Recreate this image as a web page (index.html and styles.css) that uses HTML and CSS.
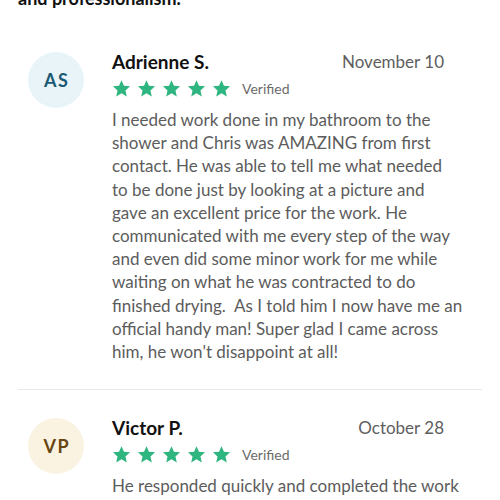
FILE: index.html
```html
<!DOCTYPE html>
<html>
<head>
<meta charset="utf-8">
<link rel="stylesheet" href="styles.css">
</head>
<body>
<p class="intro">and professionalism.</p>
<div class="review">
  <div class="avatar avatar-blue">AS</div>
  <div class="content">
    <div class="head">
      <div class="name">Adrienne S.</div>
      <div class="date">November 10</div>
    </div>
    <div class="rating">
      <span class="stars">
        <svg viewBox="0 0 24 24"><path d="M12 1.5l3.1 7.1 7.7.7-5.8 5.1 1.7 7.6L12 18l-6.7 4 1.7-7.6-5.8-5.1 7.7-.7z"/></svg>
        <svg viewBox="0 0 24 24"><path d="M12 1.5l3.1 7.1 7.7.7-5.8 5.1 1.7 7.6L12 18l-6.7 4 1.7-7.6-5.8-5.1 7.7-.7z"/></svg>
        <svg viewBox="0 0 24 24"><path d="M12 1.5l3.1 7.1 7.7.7-5.8 5.1 1.7 7.6L12 18l-6.7 4 1.7-7.6-5.8-5.1 7.7-.7z"/></svg>
        <svg viewBox="0 0 24 24"><path d="M12 1.5l3.1 7.1 7.7.7-5.8 5.1 1.7 7.6L12 18l-6.7 4 1.7-7.6-5.8-5.1 7.7-.7z"/></svg>
        <svg viewBox="0 0 24 24"><path d="M12 1.5l3.1 7.1 7.7.7-5.8 5.1 1.7 7.6L12 18l-6.7 4 1.7-7.6-5.8-5.1 7.7-.7z"/></svg>
      </span>
      <span class="verified">Verified</span>
    </div>
    <p class="text">I needed work done in my bathroom to the<br>shower and Chris was AMAZING from first<br>contact. He was able to tell me what needed<br>to be done just by looking at a picture and<br>gave an excellent price for the work. He<br>communicated with me every step of the way<br>and even did some minor work for me while<br>waiting on what he was contracted to do<br>finished drying.&nbsp; As I told him I now have me an<br>official handy man! Super glad I came across<br>him, he won't disappoint at all!</p>
  </div>
</div>
<hr class="divider">
<div class="review">
  <div class="avatar avatar-cream">VP</div>
  <div class="content">
    <div class="head">
      <div class="name">Victor P.</div>
      <div class="date">October 28</div>
    </div>
    <div class="rating">
      <span class="stars">
        <svg viewBox="0 0 24 24"><path d="M12 1.5l3.1 7.1 7.7.7-5.8 5.1 1.7 7.6L12 18l-6.7 4 1.7-7.6-5.8-5.1 7.7-.7z"/></svg>
        <svg viewBox="0 0 24 24"><path d="M12 1.5l3.1 7.1 7.7.7-5.8 5.1 1.7 7.6L12 18l-6.7 4 1.7-7.6-5.8-5.1 7.7-.7z"/></svg>
        <svg viewBox="0 0 24 24"><path d="M12 1.5l3.1 7.1 7.7.7-5.8 5.1 1.7 7.6L12 18l-6.7 4 1.7-7.6-5.8-5.1 7.7-.7z"/></svg>
        <svg viewBox="0 0 24 24"><path d="M12 1.5l3.1 7.1 7.7.7-5.8 5.1 1.7 7.6L12 18l-6.7 4 1.7-7.6-5.8-5.1 7.7-.7z"/></svg>
        <svg viewBox="0 0 24 24"><path d="M12 1.5l3.1 7.1 7.7.7-5.8 5.1 1.7 7.6L12 18l-6.7 4 1.7-7.6-5.8-5.1 7.7-.7z"/></svg>
      </span>
      <span class="verified">Verified</span>
    </div>
    <p class="text">He responded quickly and completed the work<br>in a timely manner. Very professional and<br>reasonably priced.</p>
  </div>
</div>
</body>
</html>
```
FILE: styles.css
```css
html, body {
  margin: 0;
  padding: 0;
  background: #fff;
}
body {
  font-family: Lato, "Open Sans", sans-serif;
  color: #222;
  overflow: hidden;
  height: 500px;
}
.intro {
  margin: -13px 0 16px 18px;
  font-size: 18px;
  line-height: 22px;
  font-weight: 700;
  color: #111;
}
.review {
  display: flex;
  gap: 28px;
  padding: 25px 18px 0 28px;
}
.avatar {
  flex: 0 0 56px;
  width: 56px;
  height: 56px;
  margin-top: 2px;
  border-radius: 50%;
  display: flex;
  align-items: center;
  justify-content: center;
  font-weight: 700;
  font-size: 18px;
  letter-spacing: 1.5px;
  text-indent: 1.5px;
}
.avatar-blue {
  background: #e9f4f8;
  color: #1b5a73;
}
.avatar-cream {
  background: #fbf3e1;
  color: #684613;
}
.content {
  flex: 1;
  min-width: 0;
}
.head {
  display: flex;
  justify-content: space-between;
  align-items: baseline;
  padding-right: 38px;
}
.name {
  font-size: 19px;
  line-height: 24px;
  font-weight: 700;
  color: #111;
}
.date {
  font-size: 17px;
  line-height: 22px;
  color: #5e5e5e;
  position: relative;
  top: -1px;
}
.rating {
  display: flex;
  align-items: center;
  height: 26px;
  margin-top: 1px;
}
.stars {
  display: flex;
  gap: 6px;
}
.stars svg {
  width: 19px;
  height: 19px;
  fill: #2fb57f;
}
.verified {
  margin-left: 11px;
  font-size: 14px;
  color: #6b6b6b;
}
.text {
  margin: 7px 0 0;
  font-size: 17px;
  line-height: 23.2px;
  color: #5c5c5c;
  white-space: nowrap;
}
.divider {
  border: 0;
  border-top: 1px solid #e6e8ea;
  margin: 26px 18px 1px;
}
```
